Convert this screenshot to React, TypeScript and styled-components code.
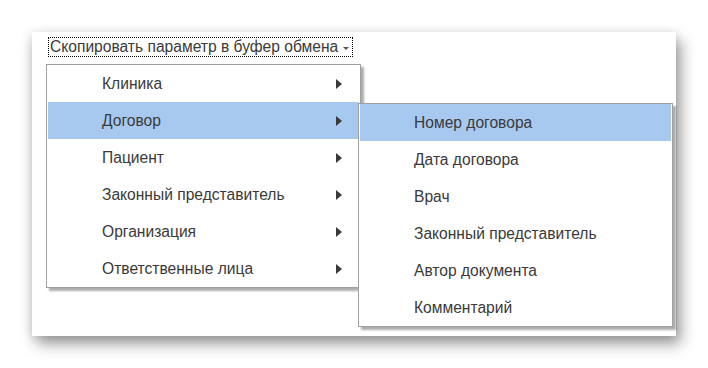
import styled, { createGlobalStyle } from 'styled-components';

const mainItems = [
  'Клиника',
  'Договор',
  'Пациент',
  'Законный представитель',
  'Организация',
  'Ответственные лица',
];

const subItems = [
  'Номер договора',
  'Дата договора',
  'Врач',
  'Законный представитель',
  'Автор документа',
  'Комментарий',
];

export default function App() {
  return (
    <>
      <GlobalStyle />
      <Page>
        <Window>
          <CopyButton>
            Скопировать параметр в буфер обмена
            <Caret />
          </CopyButton>

          <MainMenu>
            {mainItems.map((item, i) => (
              <MenuItem key={item} $active={i === 1}>
                <span>{item}</span>
                <Arrow />
              </MenuItem>
            ))}

            <SubMenu>
              {subItems.map((item, i) => (
                <MenuItem key={item} $active={i === 0}>
                  <span>{item}</span>
                </MenuItem>
              ))}
            </SubMenu>
          </MainMenu>
        </Window>
      </Page>
    </>
  );
}

const GlobalStyle = createGlobalStyle`
  html, body {
    margin: 0;
    padding: 0;
    background: #ffffff;
  }
  body {
    font-family: "Liberation Sans", Arial, sans-serif;
  }
`;

const Page = styled.div`
  width: 708px;
  height: 368px;
  padding: 32px 0 0 32px;
  box-sizing: border-box;
  overflow: hidden;
`;

const Window = styled.div`
  position: relative;
  width: 644px;
  height: 304px;
  background: #ffffff;
  box-shadow: 5px 8px 14px rgba(0, 0, 0, 0.38), -2px 2px 10px rgba(0, 0, 0, 0.12);
  padding: 5px 0 0 14px;
  box-sizing: border-box;
  display: flex;
  flex-direction: column;
  align-items: flex-start;
  gap: 7px;
`;

const CopyButton = styled.div`
  display: flex;
  align-items: center;
  gap: 5px;
  margin-left: 2px;
  padding: 1px 3px 1px 1px;
  border: 1px dotted #000;
  font-size: 15.6px;
  line-height: 16px;
  color: #3a3a3a;
  white-space: nowrap;
`;

const Caret = styled.span`
  width: 0;
  height: 0;
  border-left: 3px solid transparent;
  border-right: 3px solid transparent;
  border-top: 3px solid #555;
  margin-top: 2px;
`;

const MainMenu = styled.div`
  position: relative;
  width: 315px;
  box-sizing: border-box;
  border: 1px solid #a0a0a0;
  background: #ffffff;
  padding: 0 1px;
  box-shadow: 3px 3px 2px rgba(0, 0, 0, 0.32);
`;

const SubMenu = styled.div`
  position: absolute;
  left: 311px;
  top: 38px;
  width: 315px;
  box-sizing: border-box;
  border: 1px solid #a0a0a0;
  background: #ffffff;
  padding: 0 1px;
  box-shadow: 3px 3px 2px rgba(0, 0, 0, 0.32);
  z-index: 2;
`;

const MenuItem = styled.div<{ $active?: boolean }>`
  height: 37px;
  display: flex;
  align-items: center;
  justify-content: space-between;
  padding: 0 17px 0 54px;
  background: ${(p) => (p.$active ? '#a7c9ef' : 'transparent')};
  font-size: 15.6px;
  color: #3a3a3a;
  white-space: nowrap;
`;

const Arrow = styled.span`
  width: 0;
  height: 0;
  border-top: 5.5px solid transparent;
  border-bottom: 5.5px solid transparent;
  border-left: 6px solid #3a3a3a;
`;
